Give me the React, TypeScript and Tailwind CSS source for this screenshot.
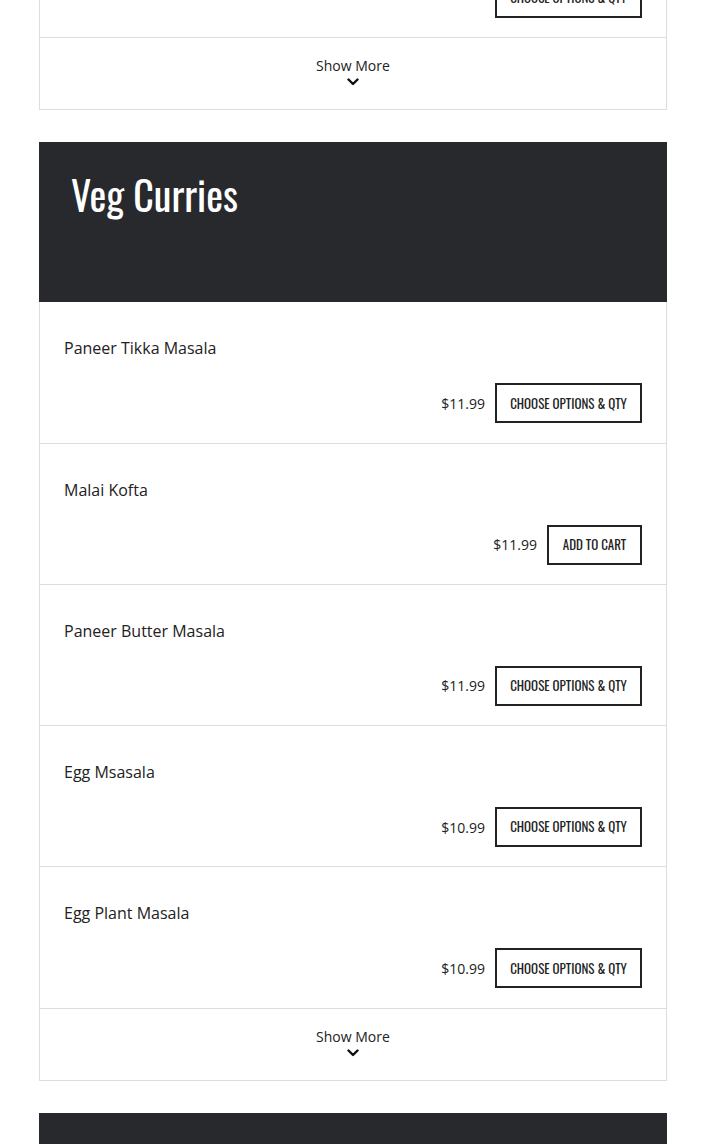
import React from "react";

type Item = { name: string; price: string; kind: "options" | "cart" };

const items: Item[] = [
  { name: "Paneer Tikka Masala", price: "$11.99", kind: "options" },
  { name: "Malai Kofta", price: "$11.99", kind: "cart" },
  { name: "Paneer Butter Masala", price: "$11.99", kind: "options" },
  { name: "Egg Msasala", price: "$10.99", kind: "options" },
  { name: "Egg Plant Masala", price: "$10.99", kind: "options" },
];

function Chevron() {
  return (
    <svg width="12" height="8" viewBox="0 0 12 8" className="mt-[2px]">
      <path d="M1.5 1.5 L6 6 L10.5 1.5" fill="none" stroke="#111" strokeWidth="2.4" strokeLinecap="round" strokeLinejoin="round" />
    </svg>
  );
}

function Row({ item }: { item: Item }) {
  return (
    <div className="border-b border-[#dddddd] px-6 pt-[34px] pb-[19.25px]">
      <div className="h-6 text-[16px] leading-6 text-[#222]">{item.name}</div>
      <div className="mt-[23px] flex items-center justify-end gap-[10px]">
        {item.price && <span className="text-[14px] text-[#222]">{item.price}</span>}
        {item.kind === "options" ? (
          <button className="h-10 w-[147px] border-2 border-[#222] bg-white font-['Oswald','Liberation_Sans_Narrow','DejaVu_Sans_Condensed',sans-serif] text-[13px] uppercase text-[#222]">
            Choose Options &amp; Qty
          </button>
        ) : (
          <button className="h-10 w-[95px] border-2 border-[#222] bg-white font-['Oswald','Liberation_Sans_Narrow','DejaVu_Sans_Condensed',sans-serif] text-[13px] uppercase text-[#222]">
            Add to Cart
          </button>
        )}
      </div>
    </div>
  );
}

function ShowMore() {
  return (
    <div className="flex h-[71px] flex-col items-center pt-[18px]">
      <span className="text-[14px] leading-5 text-[#222]">Show More</span>
      <Chevron />
    </div>
  );
}

export default function App() {
  return (
    <div className="min-h-screen overflow-hidden bg-white pl-[39px] pr-[38px] font-['Open_Sans',sans-serif]">
      <div className="-mt-[104px] mb-8 border border-[#dddddd]">
        <Row item={{ name: "", price: "", kind: "options" }} />
        <ShowMore />
      </div>

      <div className="mb-8">
        <div className="h-[160px] bg-[#27292c] px-8 pt-[24px]">
          <h2 className="font-['Oswald','Liberation_Sans_Narrow','DejaVu_Sans_Condensed',sans-serif] text-[40px] leading-[56px] text-white">
            Veg Curries
          </h2>
        </div>
        <div className="border border-t-0 border-[#dddddd]">
          {items.map((it) => (
            <Row key={it.name} item={it} />
          ))}
          <ShowMore />
        </div>
      </div>

      <div className="h-[160px] bg-[#27292c]" />
    </div>
  );
}
